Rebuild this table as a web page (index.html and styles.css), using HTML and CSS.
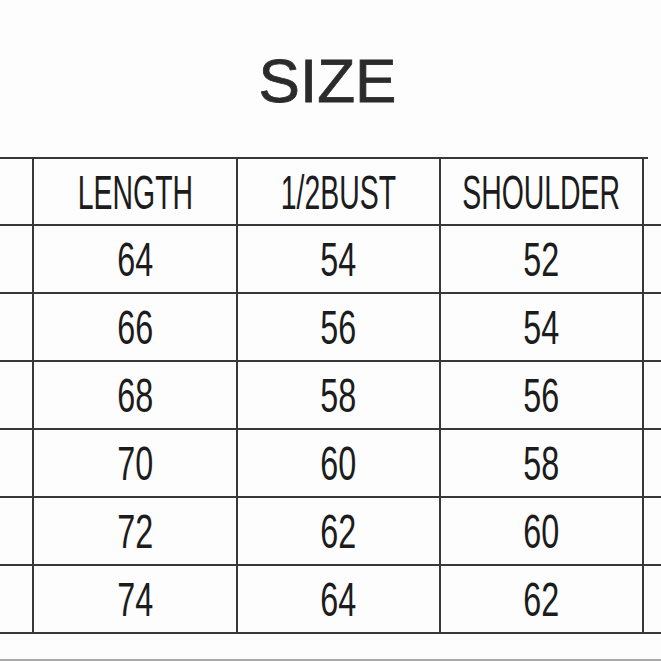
FILE: index.html
```html
<!DOCTYPE html>
<html lang="en">
<head>
<meta charset="utf-8">
<title>SIZE</title>
<link rel="stylesheet" href="styles.css">
</head>
<body>
<div class="page">
  <h1 class="title">SIZE</h1>
  <div class="table-wrap">
    <div class="grid">
      <div class="cell"></div><div class="cell head"><span>LENGTH</span></div><div class="cell head"><span>1/2BUST</span></div><div class="cell head"><span>SHOULDER</span></div><div class="cell"></div>
      <div class="cell"></div><div class="cell"><span>64</span></div><div class="cell"><span>54</span></div><div class="cell"><span>52</span></div><div class="cell"></div>
      <div class="cell"></div><div class="cell"><span>66</span></div><div class="cell"><span>56</span></div><div class="cell"><span>54</span></div><div class="cell"></div>
      <div class="cell"></div><div class="cell"><span>68</span></div><div class="cell"><span>58</span></div><div class="cell"><span>56</span></div><div class="cell"></div>
      <div class="cell"></div><div class="cell"><span>70</span></div><div class="cell"><span>60</span></div><div class="cell"><span>58</span></div><div class="cell"></div>
      <div class="cell"></div><div class="cell"><span>72</span></div><div class="cell"><span>62</span></div><div class="cell"><span>60</span></div><div class="cell"></div>
      <div class="cell"></div><div class="cell"><span>74</span></div><div class="cell"><span>64</span></div><div class="cell"><span>62</span></div><div class="cell"></div>
    </div>
  </div>
  <div class="foot-line"></div>
</div>
</body>
</html>
```
FILE: styles.css
```css
html, body {
  margin: 0;
  padding: 0;
  background: #fdfdfd;
  overflow: hidden;
}
.page {
  width: 661px;
  height: 661px;
  overflow: hidden;
  padding-top: 50px;
  box-sizing: border-box;
}
.title {
  margin: 0;
  padding-right: 6px;
  text-align: center;
  font-family: "Liberation Sans", Arial, sans-serif;
  font-weight: normal;
  font-size: 62px;
  line-height: 62px;
  height: 62px;
  color: #2b2b2b;
  -webkit-text-stroke: 0.8px #2b2b2b;
}
.table-wrap {
  margin-top: 45px;
  width: 661px;
  overflow: hidden;
}
.grid {
  display: grid;
  grid-template-columns: 204px 204px 203px 203px 204px;
  grid-template-rows: 67px repeat(6, 68px);
  margin-left: -170px;
  width: 818px;
  border-top: 2px solid #383838;
}
.cell {
  box-sizing: border-box;
  border-right: 2px solid #383838;
  border-bottom: 2px solid #383838;
  display: flex;
  align-items: center;
  justify-content: center;
  font-family: "Liberation Sans", Arial, sans-serif;
  font-size: 49px;
  color: #1c1c1c;
  overflow: hidden;
}
.cell span {
  display: inline-block;
  transform: scaleX(0.66);
  white-space: nowrap;
}
.cell.head span {
  transform: scaleX(0.58);
}
.foot-line {
  margin-top: 25px;
  border-top: 2px solid #a8a8a8;
}
```
